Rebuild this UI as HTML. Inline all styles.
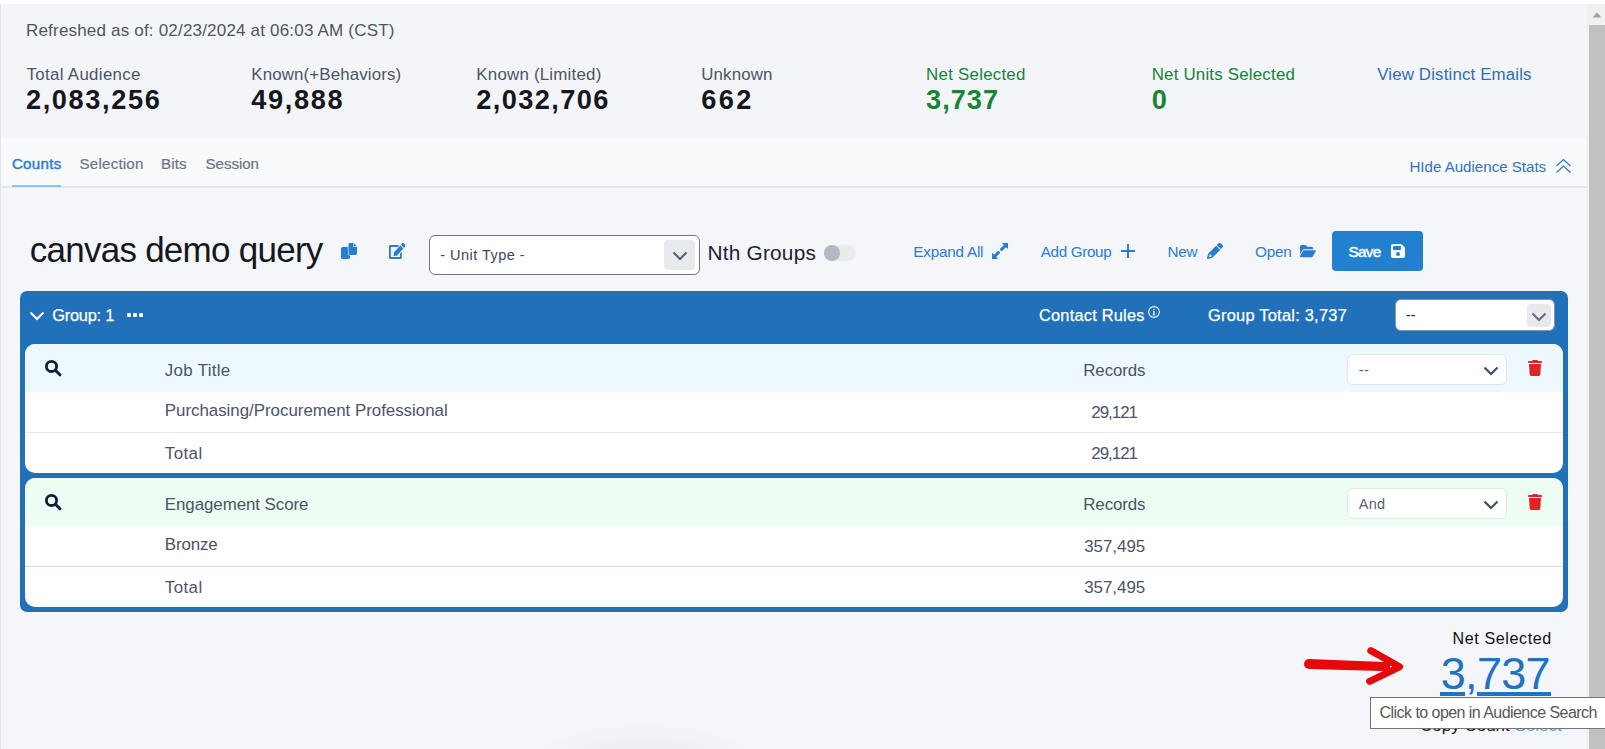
<!DOCTYPE html>
<html><head><meta charset="utf-8">
<style>
*{box-sizing:border-box;margin:0;padding:0}
html,body{width:1605px;height:749px;overflow:hidden;background:#fff}
body{position:relative;font-family:"Liberation Sans",sans-serif}
.a{position:absolute;white-space:nowrap;line-height:normal}
</style></head><body>
<div class="a" style="left:0px;top:4px;width:1px;height:745px;background:#e0e5ee"></div>
<div class="a" style="left:1px;top:4px;width:1586px;height:135px;background:#f4f5f9"></div>
<div class="a" style="left:1px;top:139px;width:1586px;height:47px;background:#f9fafb"></div>
<div class="a" style="left:1px;top:186px;width:1586px;height:2px;background:#e6e7ea"></div>
<div class="a" style="left:1px;top:188px;width:1586px;height:561px;background:#f4f6fa"></div>
<div class="a" style="left:1587px;top:4px;width:18px;height:745px;background:#f1f1f1"></div>
<div class="a" style="left:1589px;top:25px;width:16px;height:724px;background:#c1c1c1"></div>
<svg class="a" style="left:1592px;top:12px" width="10" height="7" viewBox="0 0 10 7"><path d="M5 0.5 L9.5 5.5 L0.5 5.5Z" fill="#a3a3a3"/></svg>
<div class="a" style="left:26px;top:20.5px;font-size:17px;color:#4b5565;letter-spacing:0.19px">Refreshed as of: 02/23/2024 at 06:03 AM (CST)</div>
<div class="a" style="left:26.5px;top:64.5px;font-size:16.9px;color:#4b5565;letter-spacing:0.315px">Total Audience</div>
<div class="a" style="left:26.0px;top:84.2px;font-size:27.2px;color:#14171f;letter-spacing:1.6px;font-weight:700">2,083,256</div>
<div class="a" style="left:251.3px;top:64.5px;font-size:16.9px;color:#4b5565;letter-spacing:0.125px">Known(+Behaviors)</div>
<div class="a" style="left:251.3px;top:84.2px;font-size:27.2px;color:#14171f;letter-spacing:1.62px;font-weight:700">49,888</div>
<div class="a" style="left:476.3px;top:64.5px;font-size:16.9px;color:#4b5565;letter-spacing:0.214px">Known (Limited)</div>
<div class="a" style="left:476.3px;top:84.2px;font-size:27.2px;color:#14171f;letter-spacing:1.4px;font-weight:700">2,032,706</div>
<div class="a" style="left:701.2px;top:64.5px;font-size:16.9px;color:#4b5565;letter-spacing:0.15px">Unknown</div>
<div class="a" style="left:701.2px;top:84.2px;font-size:27.2px;color:#14171f;letter-spacing:2.35px;font-weight:700">662</div>
<div class="a" style="left:926.1px;top:64.5px;font-size:16.9px;color:#168535;letter-spacing:0.236px">Net Selected</div>
<div class="a" style="left:926.1px;top:84.2px;font-size:27.2px;color:#168535;letter-spacing:0.975px;font-weight:700">3,737</div>
<div class="a" style="left:1151.7px;top:64.5px;font-size:16.9px;color:#168535;letter-spacing:0.194px">Net Units Selected</div>
<div class="a" style="left:1151.7px;top:84.2px;font-size:27.2px;color:#168535;font-weight:700">0</div>
<div class="a" style="left:1377.2px;top:64.5px;font-size:16.9px;color:#2f6eb6;letter-spacing:0.137px">View Distinct Emails</div>
<div class="a" style="left:11.9px;top:155.3px;font-size:15.1px;color:#2b7dd2;letter-spacing:0.3px;-webkit-text-stroke:0.45px #2b7dd2">Counts</div>
<div class="a" style="left:12px;top:185px;width:49px;height:2px;background:#76ccf8"></div>
<div class="a" style="left:79.6px;top:155.3px;font-size:15.1px;color:#6b7386;letter-spacing:0.21px;-webkit-text-stroke:0.2px #6b7386">Selection</div>
<div class="a" style="left:161.1px;top:155.3px;font-size:15.1px;color:#6b7386;letter-spacing:0.13px;-webkit-text-stroke:0.2px #6b7386">Bits</div>
<div class="a" style="left:205.6px;top:155.3px;font-size:15.1px;color:#6b7386;letter-spacing:-0.05px;-webkit-text-stroke:0.2px #6b7386">Session</div>
<div class="a" style="left:1409.4px;top:158.3px;font-size:15.1px;color:#2f74c0">HIde Audience Stats</div>
<svg class="a" style="left:1555px;top:158px" width="17" height="16" viewBox="0 0 17 16"><path d="M1.5 8 L8.5 1.5 L15.5 8 M1.5 14.5 L8.5 8 L15.5 14.5" fill="none" stroke="#2f74c0" stroke-width="1.25"/></svg>
<div class="a" style="left:29.7px;top:230.3px;font-size:35px;color:#14171f;letter-spacing:-0.74px">canvas demo query</div>
<svg class="a" style="left:341px;top:243px" width="16" height="16" viewBox="0 0 16 16"><rect x="0" y="4" width="9" height="12" rx="1.6" fill="#2a7cd1"/><path d="M8.9 0H12.4V3.9H16V10.6Q16 12 14.6 12H8.9Q7.5 12 7.5 10.6V1.4Q7.5 0 8.9 0Z" fill="#2a7cd1" stroke="#f4f6fa" stroke-width="1.1" paint-order="stroke"/><path d="M12.9 0.2L16 3.3H12.9Z" fill="#2a7cd1"/></svg>
<svg class="a" style="left:389px;top:243px" width="16" height="16" viewBox="0 0 558 512" preserveAspectRatio="none"><path fill="#2a7cd1" d="M402.6 83.2l90.2 90.2c3.8 3.8 3.8 10 0 13.8L274.4 405.6l-92.8 10.3c-12.4 1.4-22.9-9.1-21.5-21.5l10.3-92.8L388.8 83.2c3.8-3.8 10-3.8 13.8 0zm162-22.9l-48.8-48.8c-15.2-15.2-39.9-15.2-55.2 0l-35.4 35.4c-3.8 3.8-3.8 10 0 13.8l90.2 90.2c3.8 3.8 10 3.8 13.8 0l35.4-35.4c15.2-15.3 15.2-40 0-55.2zM384 346.2V448H64V128h229.8c3.2 0 6.2-1.3 8.5-3.5l40-40c7.6-7.6 2.2-20.5-8.5-20.5H48C21.5 64 0 85.5 0 112v352c0 26.5 21.5 48 48 48h352c26.5 0 48-21.5 48-48V306.2c0-10.7-12.9-16-20.5-8.5l-40 40c-2.2 2.3-3.5 5.3-3.5 8.5z"/></svg>
<div class="a" style="left:429px;top:235px;width:271px;height:40px;background:#fff;border:1.3px solid #6f7888;border-radius:6px"></div>
<div class="a" style="left:440.3px;top:246.8px;font-size:14.5px;color:#3d4757;letter-spacing:0.46px">- Unit Type -</div>
<div class="a" style="left:664px;top:240px;width:31px;height:30px;background:#e9eaee;border-radius:4px"></div>
<svg class="a" style="left:672px;top:251px" width="16" height="10" viewBox="0 0 16 10"><path d="M1.5 1.5 L8 8 L14.5 1.5" fill="none" stroke="#4f5d73" stroke-width="2"/></svg>
<div class="a" style="left:707.5px;top:241px;font-size:20.8px;color:#1d2230;letter-spacing:0.22px">Nth Groups</div>
<div class="a" style="left:824px;top:245px;width:32px;height:16px;background:#ebebeb;border-radius:8px"></div>
<div class="a" style="left:824px;top:245px;width:16px;height:16px;background:#b2b7c4;border-radius:50%"></div>
<div class="a" style="left:913.3px;top:243.4px;font-size:15.26px;color:#2a7cd1;letter-spacing:-0.21px">Expand All</div>
<svg class="a" style="left:992px;top:243px" width="16" height="16" viewBox="0 0 16 16"><path fill="#2a7cd1" d="M9.8 0H16V6.2Z M0 9.8V16H6.2Z"/><path d="M13 3L9.6 6.4 M3 13L6.4 9.6" stroke="#2a7cd1" stroke-width="3" stroke-linecap="round"/></svg>
<div class="a" style="left:1040.7px;top:243.4px;font-size:15.26px;color:#2a7cd1;letter-spacing:-0.34px">Add Group</div>
<svg class="a" style="left:1121px;top:244px" width="14" height="14" viewBox="0 0 14 14"><path d="M7 0 V14 M0 7 H14" fill="none" stroke="#2a7cd1" stroke-width="2"/></svg>
<div class="a" style="left:1167.4px;top:243.4px;font-size:15.26px;color:#2a7cd1;letter-spacing:-0.25px">New</div>
<svg class="a" style="left:1207px;top:243px" width="16" height="16" viewBox="0 0 512 512"><path fill="#2a7cd1" d="M410.3 231l11.3-11.3-33.9-33.9-62.1-62.1L291.7 89.8l-11.3 11.3-22.6 22.6L58.6 322.9c-10.4 10.4-18 23.3-22.2 37.4L1 480.7c-2.5 8.4-.2 17.5 6.1 23.7s15.3 8.5 23.7 6.1l120.3-35.4c14.1-4.2 27-11.8 37.4-22.2L387.7 253.7 410.3 231zM160 399.4l-9.1 22.7c-4 3.1-8.5 5.4-13.3 6.9L59.4 452l23-78.1c1.4-4.9 3.8-9.4 6.9-13.3l22.7-9.1v32c0 8.8 7.2 16 16 16h32zM362.7 18.7L348.3 33.2 325.7 55.8 314.3 67.1l33.9 33.9 62.1 62.1 33.9 33.9 11.3-11.3 22.6-22.6 14.5-14.5c25-25 25-65.5 0-90.5L453.3 18.7c-25-25-65.5-25-90.5 0z"/></svg>
<div class="a" style="left:1255px;top:243.4px;font-size:15.26px;color:#2a7cd1;letter-spacing:-0.17px">Open</div>
<svg class="a" style="left:1300px;top:243.7px" width="15.8" height="14.1" viewBox="0 0 576 512"><path fill="#2a7cd1" d="M88.7 223.8L0 375.8V96C0 60.7 28.7 32 64 32H181.5c17 0 33.3 6.7 45.3 18.7l26.5 26.5c12 12 28.3 18.7 45.3 18.7H416c35.3 0 64 28.7 64 64v32H144c-22.8 0-43.8 12.1-55.3 31.8zm27.6 16.1C122.1 230 132.6 224 144 224H544c11.5 0 22 6.1 27.7 16.1s5.7 22.2-.1 32.1l-112 192C453.9 474 443.4 480 432 480H32c-11.5 0-22-6.1-27.7-16.1s-5.7-22.2 .1-32.1l112-192z"/></svg>
<div class="a" style="left:1332px;top:231px;width:91px;height:40px;background:#2181d0;border-radius:4px"></div>
<div class="a" style="left:1348.4px;top:243.2px;font-size:15.26px;color:#fff;letter-spacing:-0.6px;-webkit-text-stroke:0.45px #fff">Save</div>
<svg class="a" style="left:1391px;top:244px" width="14" height="14" viewBox="0 32 448 448" preserveAspectRatio="none"><path fill="#fff" d="M64 32C28.7 32 0 60.7 0 96V416c0 35.3 28.7 64 64 64H384c35.3 0 64-28.7 64-64V173.3c0-17-6.7-33.3-18.7-45.3L352 50.7C340 38.7 323.7 32 306.7 32H64zm0 96c0-17.7 14.3-32 32-32H288c17.7 0 32 14.3 32 32v64c0 17.7-14.3 32-32 32H96c-17.7 0-32-14.3-32-32V128zM224 288a64 64 0 1 1 0 128 64 64 0 1 1 0-128z"/></svg>
<div class="a" style="left:20px;top:291px;width:1548px;height:321px;background:#2171ba;border-radius:7px"></div>
<svg class="a" style="left:29px;top:311px" width="16" height="10" viewBox="0 0 16 10"><path d="M1.5 1.5 L8 8 L14.5 1.5" fill="none" stroke="#fff" stroke-width="2"/></svg>
<div class="a" style="left:52.2px;top:306px;font-size:16.42px;color:#fff;letter-spacing:-0.25px;-webkit-text-stroke:0.25px #fff">Group: 1</div>
<div class="a" style="left:127px;top:313px;width:4px;height:4px;background:#fff;border-radius:1px"></div>
<div class="a" style="left:133px;top:313px;width:4px;height:4px;background:#fff;border-radius:1px"></div>
<div class="a" style="left:139px;top:313px;width:4px;height:4px;background:#fff;border-radius:1px"></div>
<div class="a" style="left:1039px;top:306px;font-size:16.42px;color:#fff;letter-spacing:0.2px;-webkit-text-stroke:0.25px #fff">Contact Rules</div>
<svg class="a" style="left:1148px;top:306px" width="12" height="12" viewBox="0 0 12 12"><circle cx="6" cy="6" r="5.35" fill="none" stroke="#fff" stroke-width="1.1"/><path d="M4.9 5H6.6V8.5H7.4V9.3H4.6V8.5H5.4V5.8H4.9Z" fill="#fff"/><rect x="5.2" y="2.9" width="1.5" height="1" fill="#fff"/></svg>
<div class="a" style="left:1208px;top:306px;font-size:16.42px;color:#fff;letter-spacing:0.24px;-webkit-text-stroke:0.25px #fff">Group Total: 3,737</div>
<div class="a" style="left:1395px;top:299px;width:160px;height:32px;background:#fff;border:1px solid #8b95a5;border-radius:6px"></div>
<div class="a" style="left:1406px;top:307px;font-size:14px;color:#222">--</div>
<div class="a" style="left:1527px;top:304px;width:24px;height:23px;background:#e8e9ec;border-radius:4px"></div>
<svg class="a" style="left:1531px;top:312px" width="16" height="10" viewBox="0 0 16 10"><path d="M1.5 1.5 L8 8 L14.5 1.5" fill="none" stroke="#5d6c86" stroke-width="2"/></svg>
<div class="a" style="left:25px;top:344px;width:1538px;height:129px;background:#fff;border-radius:10px;overflow:hidden"><div style="position:absolute;left:0;top:0;width:1538px;height:48px;background:#edf9fe"></div><div style="position:absolute;left:0;top:88px;width:1538px;height:1px;background:#e4e7eb"></div></div>
<svg class="a" style="left:44px;top:359px" width="18" height="18" viewBox="0 0 18 18"><circle cx="7.5" cy="7.4" r="5.1" fill="none" stroke="#0f1d3a" stroke-width="2.8"/><path d="M11.6 11.5L15.9 15.8" stroke="#0f1d3a" stroke-width="3" stroke-linecap="round"/></svg>
<div class="a" style="left:164.8px;top:360.70550000000003px;font-size:16.9px;color:#4a5467;letter-spacing:0.31px">Job Title</div>
<div class="a" style="left:1083.3px;top:360.70550000000003px;font-size:16.9px;color:#4a5467;letter-spacing:-0.12px">Records</div>
<div class="a" style="left:164.8px;top:400.70550000000003px;font-size:16.9px;color:#4a5467;letter-spacing:-0.02px">Purchasing/Procurement Professional</div>
<div class="a" style="left:1091.3px;top:402.70550000000003px;font-size:16.9px;color:#4a5467;letter-spacing:-1.0px">29,121</div>
<div class="a" style="left:164.8px;top:443.90549999999996px;font-size:16.9px;color:#4a5467;letter-spacing:0.42px">Total</div>
<div class="a" style="left:1091.3px;top:443.90549999999996px;font-size:16.9px;color:#4a5467;letter-spacing:-1.0px">29,121</div>
<div class="a" style="left:1347px;top:354px;width:160px;height:31px;background:#fff;border:1.2px solid #e2e4e8;border-radius:6px"></div>
<div class="a" style="left:1358.8px;top:361.8775px;font-size:14.5px;color:#596376;letter-spacing:0.25px">--</div>
<svg class="a" style="left:1483px;top:366px" width="16" height="10" viewBox="0 0 16 10"><path d="M1.5 1.5 L8 8 L14.5 1.5" fill="none" stroke="#3e4f6a" stroke-width="2.2"/></svg>
<svg class="a" style="left:1528px;top:360px" width="14" height="16" viewBox="0 0 448 512" preserveAspectRatio="none"><path fill="#dc2626" d="M135.2 17.7L128 32H32C14.3 32 0 46.3 0 64S14.3 96 32 96H416c17.7 0 32-14.3 32-32s-14.3-32-32-32H320l-7.2-14.3C307.4 6.8 296.3 0 284.2 0H163.8c-12.1 0-23.2 6.8-28.6 17.7zM416 128H32L53.2 467c1.6 25.3 22.6 45 47.9 45H346.9c25.3 0 46.3-19.7 47.9-45L416 128z"/></svg>
<div class="a" style="left:25px;top:478px;width:1538px;height:129px;background:#fff;border-radius:10px;overflow:hidden"><div style="position:absolute;left:0;top:0;width:1538px;height:48px;background:#edfdf1"></div><div style="position:absolute;left:0;top:88px;width:1538px;height:1px;background:#c8ebd0"></div></div>
<svg class="a" style="left:44px;top:493px" width="18" height="18" viewBox="0 0 18 18"><circle cx="7.5" cy="7.4" r="5.1" fill="none" stroke="#0f1d3a" stroke-width="2.8"/><path d="M11.6 11.5L15.9 15.8" stroke="#0f1d3a" stroke-width="3" stroke-linecap="round"/></svg>
<div class="a" style="left:164.8px;top:494.70550000000003px;font-size:16.9px;color:#4a5467;letter-spacing:-0.06px">Engagement Score</div>
<div class="a" style="left:1083.3px;top:494.70550000000003px;font-size:16.9px;color:#4a5467;letter-spacing:-0.12px">Records</div>
<div class="a" style="left:164.8px;top:534.7055px;font-size:16.9px;color:#4a5467;letter-spacing:-0.12px">Bronze</div>
<div class="a" style="left:1084.2px;top:536.7055px;font-size:16.9px;color:#4a5467">357,495</div>
<div class="a" style="left:164.8px;top:577.9055000000001px;font-size:16.9px;color:#4a5467;letter-spacing:0.42px">Total</div>
<div class="a" style="left:1084.2px;top:577.9055000000001px;font-size:16.9px;color:#4a5467">357,495</div>
<div class="a" style="left:1347px;top:488px;width:160px;height:31px;background:#fff;border:1.2px solid #e2e4e8;border-radius:6px"></div>
<div class="a" style="left:1358.8px;top:495.8775px;font-size:14.5px;color:#596376;letter-spacing:0.25px">And</div>
<svg class="a" style="left:1483px;top:500px" width="16" height="10" viewBox="0 0 16 10"><path d="M1.5 1.5 L8 8 L14.5 1.5" fill="none" stroke="#3e4f6a" stroke-width="2.2"/></svg>
<svg class="a" style="left:1528px;top:494px" width="14" height="16" viewBox="0 0 448 512" preserveAspectRatio="none"><path fill="#dc2626" d="M135.2 17.7L128 32H32C14.3 32 0 46.3 0 64S14.3 96 32 96H416c17.7 0 32-14.3 32-32s-14.3-32-32-32H320l-7.2-14.3C307.4 6.8 296.3 0 284.2 0H163.8c-12.1 0-23.2 6.8-28.6 17.7zM416 128H32L53.2 467c1.6 25.3 22.6 45 47.9 45H346.9c25.3 0 46.3-19.7 47.9-45L416 128z"/></svg>
<div class="a" style="left:1452.5px;top:629.1px;font-size:16.1px;color:#111;letter-spacing:0.6px">Net Selected</div>
<div class="a" style="left:1440.8px;top:648.1px;font-size:45px;color:#2172c0;letter-spacing:-0.7px">3,737</div>
<div class="a" style="left:1440px;top:692px;width:25px;height:3.6px;background:#2172c0"></div>
<div class="a" style="left:1477px;top:692px;width:74px;height:3.6px;background:#2172c0"></div>
<svg class="a" style="left:1295px;top:640px" width="120" height="50" viewBox="0 0 120 50"><path d="M14 19 L95 22.2 L95 31.3 L14 29 Z" fill="#e50a0a"/><circle cx="14" cy="24" r="5" fill="#e50a0a"/><path d="M75.8 10.6 L104.6 26.8 L74.6 41.3" fill="none" stroke="#e50a0a" stroke-width="7" stroke-linecap="round" stroke-linejoin="round"/></svg>
<div class="a" style="left:1420px;top:716.2px;font-size:17px;color:#111">Copy Count <span style="color:#4aa3f0">Select</span></div>
<div class="a" style="left:1370px;top:697px;width:240px;height:32px;background:#fff;border:1px solid #767676"></div>
<div class="a" style="left:1379.6px;top:703.5px;font-size:16px;color:#575757;letter-spacing:-0.55px">Click to open in Audience Search</div>
<div class="a" style="left:525px;top:722px;width:240px;height:44px;background:radial-gradient(ellipse at 50% 100%, rgba(0,0,20,0.06), rgba(0,0,20,0) 70%)"></div>
</body></html>
